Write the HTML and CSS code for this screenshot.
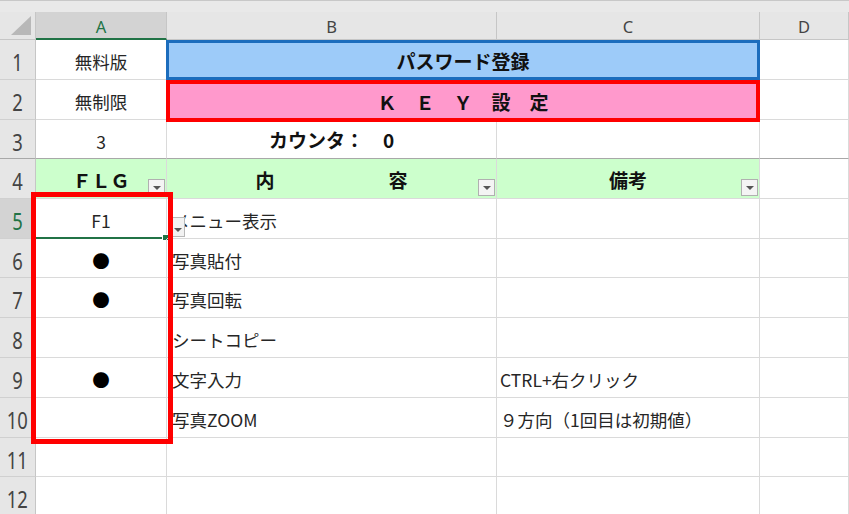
FILE: index.html
```html
<!DOCTYPE html>
<html lang="ja">
<head>
<meta charset="utf-8">
<title>KEY設定</title>
<link rel="stylesheet" href="styles.css">
</head>
<body>
<div class="sheet">
  <div class="topbar"></div>
  <div class="grid">
    <!-- column headers -->
    <div class="corner"></div>
    <div class="ch sel">A</div>
    <div class="ch">B</div>
    <div class="ch">C</div>
    <div class="ch">D</div>

    <!-- row 1 -->
    <div class="rh"><span>1</span></div>
    <div class="c mid">無料版</div>
    <div class="c title">パスワード登録</div>
    <div class="c"></div>

    <!-- row 2 -->
    <div class="rh"><span>2</span></div>
    <div class="c mid">無制限</div>
    <div class="c key">Ｋ　Ｅ　Ｙ　設　定</div>
    <div class="c"></div>

    <!-- row 3 (frozen pane ends here) -->
    <div class="rh frz"><span>3</span></div>
    <div class="c mid frz">3</div>
    <div class="c mid bold frz">カウンタ：　0</div>
    <div class="c frz"></div>
    <div class="c frz"></div>

    <!-- row 4: table header with filters -->
    <div class="rh"><span>4</span></div>
    <div class="c mid bold head">ＦＬＧ<span class="filter"></span></div>
    <div class="c mid bold head">内　　　　　　容<span class="filter"></span></div>
    <div class="c mid bold head">備考<span class="filter"></span></div>
    <div class="c"></div>

    <!-- row 5 -->
    <div class="rh rsel"><span>5</span></div>
    <div class="c mid active">F1<span class="handle"></span></div>
    <div class="c txt">メニュー表示<span class="dropdown"></span></div>
    <div class="c"></div>
    <div class="c"></div>

    <!-- row 6 -->
    <div class="rh"><span>6</span></div>
    <div class="c mid dot">●</div>
    <div class="c txt">写真貼付</div>
    <div class="c"></div>
    <div class="c"></div>

    <!-- row 7 -->
    <div class="rh"><span>7</span></div>
    <div class="c mid dot">●</div>
    <div class="c txt">写真回転</div>
    <div class="c"></div>
    <div class="c"></div>

    <!-- row 8 -->
    <div class="rh"><span>8</span></div>
    <div class="c mid"></div>
    <div class="c txt">シートコピー</div>
    <div class="c"></div>
    <div class="c"></div>

    <!-- row 9 -->
    <div class="rh"><span>9</span></div>
    <div class="c mid dot">●</div>
    <div class="c txt">文字入力</div>
    <div class="c note">CTRL+右クリック</div>
    <div class="c"></div>

    <!-- row 10 -->
    <div class="rh"><span>10</span></div>
    <div class="c mid"></div>
    <div class="c txt">写真ZOOM</div>
    <div class="c note">９方向（1回目は初期値）</div>
    <div class="c"></div>

    <!-- row 11 -->
    <div class="rh"><span>11</span></div>
    <div class="c"></div>
    <div class="c"></div>
    <div class="c"></div>
    <div class="c"></div>

    <!-- row 12 -->
    <div class="rh"><span>12</span></div>
    <div class="c"></div>
    <div class="c"></div>
    <div class="c"></div>
    <div class="c"></div>
  </div>
  <div class="mark"></div>
</div>
</body>
</html>
```

FILE: styles.css
```css
html, body {
  margin: 0;
  padding: 0;
  background: #ffffff;
  overflow: hidden;
}

.sheet {
  position: relative;
  width: 849px;
  height: 514px;
  overflow: hidden;
  font-family: "Noto Sans CJK JP", "Noto Sans", sans-serif;
}

.topbar {
  height: 11px;
  background: #e9e9e9;
  border-top: 1px solid #c8c8c8;
}

.grid {
  display: grid;
  grid-template-columns: 36px 131px 330px 263px 89px;
  grid-template-rows: 28px 40px 40px 39px 40px 40px 39px 40px 40px 40px 40px 39px 40px;
}

/* header cells */
.corner {
  position: relative;
  background: #e6e6e6;
  border-right: 1px solid #c6c6c6;
  border-bottom: 1px solid #c6c6c6;
  box-sizing: border-box;
}
.corner::after {
  content: "";
  position: absolute;
  right: 4px;
  bottom: 4px;
  width: 20px;
  height: 19px;
  background: #b8b8b8;
  clip-path: polygon(100% 0, 100% 100%, 0 100%);
}

.ch {
  display: flex;
  align-items: center;
  justify-content: center;
  background: #e6e6e6;
  border-right: 1px solid #c6c6c6;
  border-bottom: 1px solid #c6c6c6;
  box-sizing: border-box;
  font-family: "Noto Sans", sans-serif;
  font-size: 16.5px;
  color: #444444;
  padding-top: 2px;
}
.ch.sel {
  background: #d3d3d3;
  color: #217346;
  border-bottom: 2px solid #217346;
}

.rh {
  display: flex;
  align-items: center;
  justify-content: center;
  background: #e6e6e6;
  border-right: 1px solid #c6c6c6;
  border-bottom: 1px solid #d0d0d0;
  box-sizing: border-box;
  font-family: "Noto Sans", sans-serif;
  font-size: 23px;
  color: #444444;
  padding-top: 5px;
}
.rh span {
  display: inline-block;
  transform: scaleX(0.8);
}
.rh.rsel {
  background: #d3d3d3;
  color: #217346;
}

/* body cells */
.c {
  position: relative;
  display: flex;
  align-items: center;
  box-sizing: border-box;
  border-right: 1px solid #dadada;
  border-bottom: 1px solid #dadada;
  font-size: 17.5px;
  color: #262626;
  padding-top: 4px;
  white-space: nowrap;
}
.mid { justify-content: center; }
.txt { padding-left: 5px; }
.note { padding-left: 3px; }
.dot { color: #000000; }
.bold {
  font-weight: 700;
  font-size: 19px;
  color: #111111;
  padding-top: 1px;
}
.frz { border-bottom-color: #a8a8a8; }
.rh.frz { border-bottom-color: #a8a8a8; }

.title {
  grid-column: span 2;
  justify-content: center;
  background: #9dcbf9;
  border: 3px solid #1c6dbd;
  margin-left: -1px;
  font-weight: 700;
  font-size: 19px;
  color: #111111;
  padding-top: 0;
}

.key {
  grid-column: span 2;
  justify-content: center;
  background: #ff99cc;
  border: 4px solid #ff0000;
  margin: 0 0 -2px -1px;
  z-index: 1;
  font-weight: 700;
  font-size: 19px;
  color: #111111;
  padding-top: 0;
}

.head { background: #ccffcc; }

/* autofilter buttons in the table header */
.filter {
  position: absolute;
  right: 1px;
  bottom: 2px;
  width: 17px;
  height: 17px;
  box-sizing: border-box;
  background: #f4f4f4;
  border: 1px solid #b0b0b0;
}
.filter::after {
  content: "";
  position: absolute;
  left: 4px;
  top: 6px;
  border-left: 4px solid transparent;
  border-right: 4px solid transparent;
  border-top: 4px solid #555555;
}

/* active cell */
.active {
  border-bottom: 2px solid #217346;
}
.handle {
  position: absolute;
  right: -3px;
  bottom: -4px;
  width: 5px;
  height: 5px;
  background: #217346;
  border: 1px solid #ffffff;
}

/* list-validation dropdown next to the active cell */
.dropdown {
  position: absolute;
  left: 4px;
  top: 18px;
  width: 14px;
  height: 20px;
  box-sizing: border-box;
  background: #f2f2f2;
  border: 1px solid #b8b8b8;
}
.dropdown::after {
  content: "";
  position: absolute;
  left: 2px;
  bottom: 4px;
  border-left: 4px solid transparent;
  border-right: 4px solid transparent;
  border-top: 4px solid #555555;
}

/* highlight frame around the FLG column */
.mark {
  position: absolute;
  left: 31px;
  top: 192px;
  width: 142px;
  height: 252px;
  box-sizing: border-box;
  border: 5px solid #ff0000;
  z-index: 2;
}
```
